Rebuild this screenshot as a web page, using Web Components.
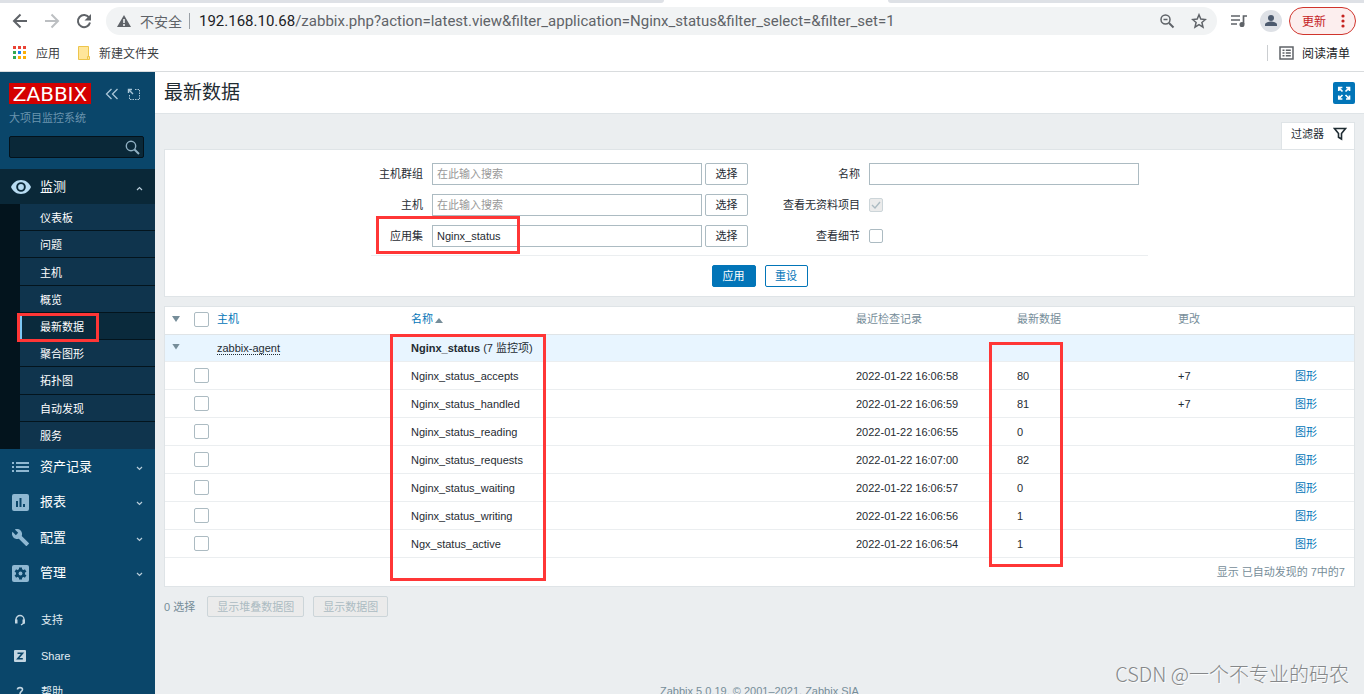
<!DOCTYPE html>
<html lang="zh-CN">
<head>
<meta charset="utf-8">
<title>最新数据</title>
<style>
html,body{margin:0;height:100%}
body{font:11px/16px "Liberation Sans","Noto Sans CJK SC",sans-serif;color:#1f2c33;overflow:hidden}
</style>
</head>
<body>
<app-window></app-window>
<script>
function define(name, html, setup) {
  const t = document.createElement('template');
  t.innerHTML = '<style>*{box-sizing:border-box}:host{display:block;box-sizing:border-box}button,input{font:inherit;margin:0}a{color:inherit;text-decoration:none}svg{display:block;flex:none}</style>' + html;
  customElements.define(name, class extends HTMLElement {
    constructor() {
      super();
      this.attachShadow({mode: 'open'}).append(t.content.cloneNode(true));
    }
    connectedCallback() { if (setup && !this.ready) { this.ready = true; setup.call(this, this.shadowRoot); } }
  });
}

define('red-mark', `<style>:host{position:absolute;border:3px solid #ff3636;pointer-events:none;z-index:5}</style>`);

define('browser-bar', `<style>
:host{background:#fff;border-bottom:1px solid #d9dcde;color:#3c4043;font-size:12px;font-family:"Noto Sans CJK SC",sans-serif}
.tabs{display:flex;height:3px;background:#fff}
.tabs i{background:#dee1e6;border-radius:0 0 6px 0;width:664px}
.tabs b{width:224px}
.tabs i:last-child{flex:1;border-radius:0 0 0 6px}
.tools{display:flex;align-items:center;height:36px;padding:0 8px 0 12px}
.nav{display:flex;gap:16px;width:94px}
.nav button,.ic{border:0;background:none;padding:0;color:#5f6368;display:block}
.nav button[disabled]{color:#bcbfc2}
.omni{flex:1;min-width:0;display:flex;align-items:center;height:28px;border-radius:14px;background:#f1f3f4;padding:0 10px;font-size:14px;color:#5f6368;white-space:nowrap}
.omni .warn{color:#5f6368;margin-right:8px}
.sep{width:1px;height:16px;background:#9aa0a6;margin:0 9px 0 7px}
.url{flex:1;font-family:Roboto,"Noto Sans CJK SC",sans-serif;font-size:15px;overflow:hidden;line-height:20px}
.url b{font-weight:400;color:#202124}
.omni .ic+.ic{margin-left:16px}
.right{display:flex;align-items:center;margin-left:14px}
.ava{width:22px;height:22px;border-radius:50%;background:#dee1e6;margin:0 7px 0 13px;color:#4c5a6e;border:0;padding:0}
.upd{display:flex;align-items:center;justify-content:space-between;width:67px;height:28px;border:1px solid #d0342c;border-radius:14px;background:#fceeee;color:#c5221f;padding:0 10px 0 12px;font-size:12px}
.marks{display:flex;align-items:center;height:32px;padding:0 14px 4px 12px}
.marks a{display:flex;align-items:center;line-height:16px}
.marks .apps{gap:9px}.marks .fold{gap:8px;margin-left:17px}
.marks .read{margin-left:auto;gap:8px;border-left:1px solid #cbced1;padding-left:11px;color:#202124}
</style>
<div class="tabs"><i></i><b></b><i></i></div>
<div class="tools">
 <div class="nav">
  <button aria-label="后退"><svg width="16" height="16" viewBox="0 0 16 16" fill="none" stroke="currentColor" stroke-width="2"><path d="M15 8H2.500M8.500 1.500L2 8l6.500 6.500"/></svg></button>
  <button aria-label="前进" disabled><svg width="16" height="16" viewBox="0 0 16 16" fill="none" stroke="currentColor" stroke-width="2"><path d="M1 8h12.500M7.500 1.500L14 8l-6.500 6.500"/></svg></button>
  <button aria-label="重新加载"><svg width="16" height="16" viewBox="0 0 16 16"><path d="M13.200 4.800A6.100 6.100 0 1 0 14 9.500" fill="none" stroke="currentColor" stroke-width="2"/><path d="M15 1v6.500H8.500z" fill="currentColor"/></svg></button>
 </div>
 <div class="omni">
  <svg class="warn" width="16" height="16" viewBox="0 0 16 16"><path d="M8 2l7 12H1z" fill="currentColor"/><path d="M8 6v4M8 11v2" stroke="#f1f3f4" stroke-width="1.600"/></svg>
  <span>不安全</span><span class="sep"></span>
  <span class="url"><b>192.168.10.68</b>/zabbix.php?action=latest.view&amp;filter_application=Nginx_status&amp;filter_select=&amp;filter_set=1</span>
  <button class="ic" aria-label="缩放"><svg width="16" height="16" viewBox="0 0 16 16" fill="none" stroke="currentColor" stroke-width="1.500"><circle cx="6.500" cy="6.500" r="4.500"/><path d="M4.500 6.500h4"/><path d="M10 10l4.500 4.500" stroke-width="2"/></svg></button>
  <button class="ic" aria-label="收藏"><svg width="16" height="16" viewBox="0 0 16 16" fill="none" stroke="currentColor" stroke-width="1.500"><path d="M8 1.800l1.800 4.300 4.600.4-3.500 3 1.100 4.600L8 11.700l-4 2.400 1.100-4.600-3.500-3 4.600-.4z"/></svg></button>
 </div>
 <div class="right">
  <button class="ic" aria-label="媒体"><svg width="16" height="16" viewBox="0 0 16 16" fill="none" stroke="currentColor" stroke-width="1.700"><path d="M0 3h9M0 7h9M0 11h6M12.500 11V3H16"/><circle cx="11" cy="11.500" r="1.700" fill="currentColor"/></svg></button>
  <button class="ava" aria-label="用户"><svg width="22" height="22" viewBox="0 0 22 22" fill="currentColor"><circle cx="11" cy="8" r="3"/><path d="M5 16v-1.500c0-2 4-3 6-3s6 1 6 3V16z"/></svg></button>
  <button class="upd">更新<svg width="4" height="14" viewBox="0 0 4 14" fill="currentColor"><circle cx="2" cy="2" r="1.600"/><circle cx="2" cy="7" r="1.600"/><circle cx="2" cy="12" r="1.600"/></svg></button>
 </div>
</div>
<div class="marks">
 <a class="apps" href="#"><svg width="15" height="14" viewBox="0 0 15 14"><path d="M1 0h3v3H1zM6 0h3v3H6zM11 0h3v3h-3z" fill="#ea4335"/><path d="M1 5h3v3H1zM1 10h3v3H1z" fill="#34a853"/><path d="M6 5h3v3H6z" fill="#1a83f0"/><path d="M11 5h3v3h-3zM6 10h3v3H6zM11 10h3v3h-3z" fill="#fbaf05"/></svg>应用</a>
 <a class="fold" href="#"><svg width="14" height="16" viewBox="0 0 14 16"><path d="M1.500 1.500h10v13h-10z" fill="#ffe69a" stroke="#edc54c"/><path d="M10.500 11.500h2v3h-2z" fill="#ffe69a" stroke="#edc54c"/></svg>新建文件夹</a>
 <a class="read" href="#"><svg width="15" height="16" viewBox="0 0 15 16" fill="none" stroke="#5f6368" stroke-width="1.500"><path d="M1 2h13v12H1z"/><path d="M3.500 5.200h2M3.500 8h2M3.500 10.800h2M6.800 5.200h5M6.800 8h5M6.800 10.800h5"/></svg>阅读清单</a>
</div>`);

define('menu-icon', `<style>:host{width:18px;color:inherit}svg{margin:auto}</style>`, function (r) {
  const I = {
    eye: ['0 0 20 14', 20, 14, '<path fill-rule="evenodd" d="M10 0C5.500 0 1.700 2.800 0 7c1.700 4.200 5.500 7 10 7s8.300-2.800 10-7c-1.700-4.200-5.500-7-10-7zm0 2.200a4.800 4.800 0 1 1 0 9.600 4.800 4.800 0 0 1 0-9.600z"/><circle cx="10" cy="7" r="2.900"/>'],
    list: ['0 0 17 12', 17, 12, '<path d="M0 1h2v2H0zM0 5h2v2H0zM0 9h2v2H0zM4 1h13v2H4zM4 5h13v2H4zM4 9h13v2H4z"/>'],
    chart: ['0 0 17 17', 17, 17, '<path fill-rule="evenodd" d="M2 0h13a2 2 0 0 1 2 2v13a2 2 0 0 1-2 2H2a2 2 0 0 1-2-2V2a2 2 0 0 1 2-2zm2 7v6h2V7zm3.500-3v9h2V4zM11 10v3h2v-3z"/>'],
    wrench: ['1 1 22 22', 17, 17, '<path d="M22.700 19l-9.100-9.100c.9-2.300.4-5-1.500-6.900-2-2-5-2.400-7.400-1.300L9 6 6 9 1.600 4.700C.4 7.100.9 10.100 2.900 12.100c1.900 1.900 4.600 2.400 6.900 1.500l9.100 9.100c.4.4 1 .4 1.400 0l2.300-2.300c.5-.4.5-1.100.1-1.400z"/>'],
    gear: ['0 0 17 17', 17, 17, '<rect width="17" height="17" rx="2"/><g fill="#0a466a"><circle cx="8.500" cy="8.500" r="4.500"/><path d="M7 2.500h3v12H7z"/><path d="M7 2.500h3v12H7z" transform="rotate(60 8.500 8.500)"/><path d="M7 2.500h3v12H7z" transform="rotate(120 8.500 8.500)"/></g><circle cx="8.500" cy="8.500" r="1.900"/>'],
    head: ['0 0 12 12', 12, 12, '<path d="M2 8V5.500a4 4 0 0 1 8 0V9L7 11" fill="none" stroke="currentColor" stroke-width="1.400"/><path d="M1 5.500h2.500v4H1zM8.500 5.500H11v4H8.500z"/>'],
    z: ['0 0 12 12', 12, 12, '<rect width="12" height="12" rx="1"/><path d="M3.500 3.200h5L3.800 8.800h5" fill="none" stroke="#0a466a" stroke-width="1.600"/>'],
    help: ['0 0 12 12', 12, 12, '<path d="M3.500 3.500C3.500 1 8.500 1 8.500 3.500 8.500 5.500 6 5.500 6 8M6 9.500v2" fill="none" stroke="currentColor" stroke-width="1.600"/>']
  }[this.getAttribute('name')];
  r.innerHTML += '<svg viewBox="' + I[0] + '" width="' + I[1] + '" height="' + I[2] + '" fill="currentColor">' + I[3] + '</svg>';
});

define('menu-item', `<style>
a{display:flex;align-items:center;height:100%;padding:0 12px 0 11px;color:#fff;font-size:13px}
menu-icon{color:#8fb8d2;margin-right:11px}
:host([open]) menu-icon{color:#b8dcf2}
:host([open]) a{background:#0a2838}
.c{margin-left:auto;margin-top:3px;color:#b9cdd9}
:host([open]) .c{transform:scaleY(-1)}
:host([small]) a{font-size:11px;color:#e3edf3}
:host([small]) menu-icon{margin-right:12px;color:#c3d6e2}
:host([small]) .c{display:none}
</style><a href="#"><slot></slot><svg class="c" width="7" height="5" viewBox="0 0 7 5" fill="none" stroke="currentColor" stroke-width="1.200"><path d="M1 1l2.500 2.500L6 1"/></svg></a>`, function (r) {
  const i = document.createElement('menu-icon');
  i.setAttribute('name', this.getAttribute('icon'));
  r.querySelector('a').prepend(i);
});

define('side-bar', `<style>
:host{width:155px;flex:none;background:#0a466a;color:#fff;overflow:hidden}
.top{display:flex;align-items:center;padding:11px 14px 0 9px}
.logo{background:#d40000;width:82px;height:21px;font:20px/22px "DejaVu Sans",sans-serif;text-align:center;white-space:nowrap}
.top button{border:0;padding:0;background:none;color:#a9c6d8;margin-left:14px}
.top button+button{margin-left:auto}
.name{padding:6px 9px 0;color:#6b94ae;line-height:16px}
.search{display:flex;align-items:center;margin:10px 11px 11px 9px;height:22px;background:#0a2838;border:1px solid #03121b;border-radius:2px;padding-right:3px;color:#90b0c3}
.search input{flex:1;min-width:0;background:none;border:0;outline:0;color:#fff;height:20px}
.search button{border:0;padding:0;background:none;color:inherit}
.first{height:35px}
nav ul{list-style:none;margin:0;padding:0 0 0 20px;background:#03141d;height:245px;display:grid;grid-auto-rows:1fr}
li{position:relative;background:#0f344d;border-bottom:1px solid #03141d}
li:last-child{border:0}
li a{display:flex;align-items:center;height:100%;padding:2px 0 0 20px;color:#fff}
li.sel{background:#0a2a3c}
li.sel a{border-left:2px solid #7cc7f5;padding-left:18px}
red-mark{left:-3px;top:0;width:82px;height:29px}
.rest{display:grid;grid-auto-rows:1fr;height:142px;margin-bottom:11px}
.foot menu-item{height:36px}
</style>
<div class="top"><span class="logo">ZABBIX</span>
<button aria-label="折叠"><svg width="14" height="12" viewBox="0 0 14 12" fill="none" stroke="currentColor" stroke-width="1.300"><path d="M6.500 1l-5 5 5 5M12.500 1l-5 5 5 5"/></svg></button>
<button aria-label="隐藏"><svg width="14" height="12" viewBox="0 0 14 12" fill="none" stroke="currentColor"><path d="M8 1.500h4.500v10H2.500V7" stroke-dasharray="1.500 1"/><path d="M1.500 5V1.500H5M2 2l4 4" stroke-width="1.400"/></svg></button></div>
<div class="name">大项目监控系统</div>
<form class="search"><input aria-label="搜索"><button type="button" aria-label="搜索"><svg width="15" height="15" viewBox="0 0 15 15" fill="none" stroke="currentColor"><circle cx="6" cy="6" r="4.700" stroke-width="1.400"/><path d="M9.500 9.500L14 14" stroke-width="2"/></svg></button></form>
<nav>
<menu-item class="first" icon="eye" open>监测</menu-item>
<ul><li><a href="#">仪表板</a></li><li><a href="#">问题</a></li><li><a href="#">主机</a></li><li><a href="#">概览</a></li><li class="sel"><a href="#">最新数据</a><red-mark></red-mark></li><li><a href="#">聚合图形</a></li><li><a href="#">拓扑图</a></li><li><a href="#">自动发现</a></li><li><a href="#">服务</a></li></ul>
<div class="rest"><menu-item icon="list">资产记录</menu-item><menu-item icon="chart">报表</menu-item><menu-item icon="wrench">配置</menu-item><menu-item icon="gear">管理</menu-item></div>
<div class="foot"><menu-item small icon="head">支持</menu-item><menu-item small icon="z">Share</menu-item><menu-item small icon="help">帮助</menu-item></div>
</nav>`);

define('filter-panel', `<style>
.tab{display:flex;width:74px;height:27px;margin-left:auto;align-items:center;gap:9px;padding:0 7px 4px 9px;background:#fff;border:1px solid #dfe4e7;border-bottom:0;color:#1f2c33;white-space:nowrap}
form{background:#fff;border:1px solid #dfe4e7;padding:13px 0 9px}
.cols{display:flex;justify-content:space-between;width:777px;margin:auto;padding:0 9px 8px 0;border-bottom:1px solid #ebeef0}
.col{display:grid;grid-template-columns:53px 316px;grid-auto-rows:22px;gap:9px 8px;align-items:center}
.col.r{grid-template-columns:90px 270px}
label{text-align:right;padding-right:1px}
.col label+*{justify-self:start}
.pair{display:flex;gap:3px}
input.t{width:270px;height:22px;border:1px solid #acbbc2;padding:0 4px;color:#1f2c33;background:#fff;outline:0}
input.t::placeholder{color:#999;opacity:1}
button{height:22px;border:1px solid #acbbc2;background:#fff;border-radius:2px;color:#1f2c33;padding:0;width:43px;line-height:18px}
input[type=checkbox]{appearance:none;width:14px;height:14px;border:1px solid #acbbc2;border-radius:2px;background:#fff}
input[type=checkbox]:disabled{background:#ebebeb url('data:image/svg+xml,<svg xmlns="http://www.w3.org/2000/svg" viewBox="0 0 12 12"><path d="M2 6l3 3 5-6" fill="none" stroke="%23acbbc2" stroke-width="1.400"/></svg>');border-color:#ccd5d9}
.act{display:flex;justify-content:center;gap:9px;padding-top:9px}
.act button{border-color:#0275b8;color:#0275b8}
.act .p{background:#0275b8;color:#fff;width:44px}
.mark{position:relative}
.mark red-mark{left:5px;top:-12px;width:144px;height:38px}
</style>
<a class="tab" href="#">过滤器<svg width="14" height="14" viewBox="0 0 14 14" fill="none" stroke="#1f2c33" stroke-width="1.600"><path d="M1.500 1.500h11L8.500 6.500v5.500l-3-1.800V6.500z"/></svg></a>
<form>
<div class="cols">
 <div class="col">
  <label for="g">主机群组</label><span class="pair"><input class="t" id="g" placeholder="在此输入搜索"><button type="button">选择</button></span>
  <label for="h">主机</label><span class="pair"><input class="t" id="h" placeholder="在此输入搜索"><button type="button">选择</button></span>
  <label class="mark" for="a">应用集<red-mark></red-mark></label><span class="pair"><input class="t" id="a" value="Nginx_status"><button type="button">选择</button></span>
 </div>
 <div class="col r">
  <label for="n">名称</label><input class="t" id="n">
  <label for="e">查看无资料项目</label><input type="checkbox" id="e" checked disabled>
  <label for="d">查看细节</label><input type="checkbox" id="d">
 </div>
</div>
<div class="act"><button class="p" type="button">应用</button><button type="button">重设</button></div>
</form>`);

define('data-table', `<style>
:host{background:#fff;border:1px solid #dfe4e7}
table{width:100%;table-layout:fixed;border-collapse:separate;border-spacing:0}
th,td{height:28px;padding:0 5px;text-align:left;font-weight:400;border-bottom:1px solid #ebeef0;line-height:16px;white-space:nowrap}
th{color:#768d99;position:relative;border-color:#dfe4e7;padding-bottom:3px}
th a,td a{color:#0275b8}
.g td{background:#e8f5ff;height:27px}
.g td a{color:#1f2c33;border-bottom:1px dotted #1f2c33;line-height:12px;display:inline-block}
.g td:first-child{padding-bottom:3px}
input{appearance:none;width:15px;height:15px;border:1px solid #acbbc2;border-radius:2px;background:#fff;display:block}
.t{border:0;width:8px;height:6px;padding:0;background:#768d99;clip-path:polygon(0 0,100% 0,50% 100%);display:block;margin-left:2px}
.u{display:inline-block;border:4px solid transparent;border-bottom:5px solid #768d99;border-top:0;margin-left:2px}
.m1{left:-16px;top:27px;width:156px;height:247px}
.m2{left:-23px;top:35px;width:74px;height:225px}
.sum{height:28px;line-height:28px;text-align:right;padding-right:9px;color:#768d99}
</style>
<table><colgroup><col style="width:24px"><col style="width:23px"><col style="width:194px"><col><col style="width:161px"><col style="width:161px"><col style="width:117px"><col style="width:64px"></colgroup>
<thead><tr><th><button class="t" aria-label="全部折叠"></button></th><th><input type="checkbox" aria-label="全选"></th><th><a href="#">主机</a></th><th><a href="#">名称<span class="u"></span></a><red-mark class="m1"></red-mark></th><th>最近检查记录</th><th>最新数据<red-mark class="m2"></red-mark></th><th>更改</th><th></th></tr></thead>
<tbody><tr class="g"><td><button class="t" aria-label="折叠"></button></td><td></td><td><a href="#">zabbix-agent</a></td><td colspan="5"><b>Nginx_status</b> (7 监控项)</td></tr></tbody></table>
<div class="sum">显示 已自动发现的 7中的7</div>`, function (r) {
  [['Nginx_status_accepts', '06:58', '80', '+7'], ['Nginx_status_handled', '06:59', '81', '+7'], ['Nginx_status_reading', '06:55', '0', ''], ['Nginx_status_requests', '07:00', '82', ''], ['Nginx_status_waiting', '06:57', '0', ''], ['Nginx_status_writing', '06:56', '1', ''], ['Ngx_status_active', '06:54', '1', '']].forEach(d => {
    r.querySelector('tbody').insertAdjacentHTML('beforeend', `<tr><td></td><td><input type="checkbox" aria-label="${d[0]}"></td><td></td><td>${d[0]}</td><td>2022-01-22 16:${d[1]}</td><td>${d[2]}</td><td>${d[3]}</td><td><a href="#">图形</a></td></tr>`);
  });
});

define('main-page', `<style>
:host{flex:1;min-width:0;background:#ebeef0;overflow:hidden}
header{display:flex;align-items:center;justify-content:space-between;height:42px;background:#fff;border-bottom:1px solid #dfe4e7;padding:0 9px}
h1{margin:0;font-size:19px;line-height:24px;font-weight:400;color:#1f2c33}
header button{border:0;padding:0;width:22px;height:22px;background:#0275b8;border-radius:2px;color:#fff}
main{padding:8px 9px 0}
data-table{margin-top:9px}
.bulk{display:flex;align-items:center;gap:9px;margin-top:9px;color:#768d99}
.bulk span{margin-right:3px}
.bulk button{height:21px;padding:0 9px;border:1px solid #ccd5d9;border-radius:2px;background:#ebebeb;color:#acbbc2;line-height:16px}
footer{text-align:center;color:#768d99;margin-top:66px}
footer a{border-bottom:1px solid}
</style>
<header><h1>最新数据</h1><button aria-label="全屏"><svg width="22" height="22" viewBox="0 0 22 22" fill="none" stroke="currentColor" stroke-width="1.700"><path d="M5.800 9V5.500h3.600M6 6l3.500 3.500M13 5.500h3.500V9M16 6l-3.500 3.500M5.800 13.500V17h3.600M6 16.500L9.500 13M13 17h3.500v-3.500M16 16.500L12.500 13"/></svg></button></header>
<main>
<filter-panel></filter-panel>
<data-table></data-table>
<div class="bulk"><span>0 选择</span><button disabled>显示堆叠数据图</button><button disabled>显示数据图</button></div>
<footer>Zabbix 5.0.19. © 2001–2021, <a href="#">Zabbix SIA</a></footer>
</main>`);

define('app-window', `<style>
:host{display:flex;flex-direction:column;height:100vh;position:relative;overflow:hidden}
browser-bar{flex:none}
.body{flex:1;display:flex;min-height:0}
.wm{position:absolute;right:15px;bottom:6px;font:20px/28px "Noto Sans CJK SC",sans-serif;font-weight:300;color:#85888a;text-shadow:1px 1px 1px #fff}
</style>
<browser-bar></browser-bar>
<div class="body"><side-bar></side-bar><main-page></main-page></div>
<div class="wm">CSDN @一个不专业的码农</div>`);
</script>
</body>
</html>
